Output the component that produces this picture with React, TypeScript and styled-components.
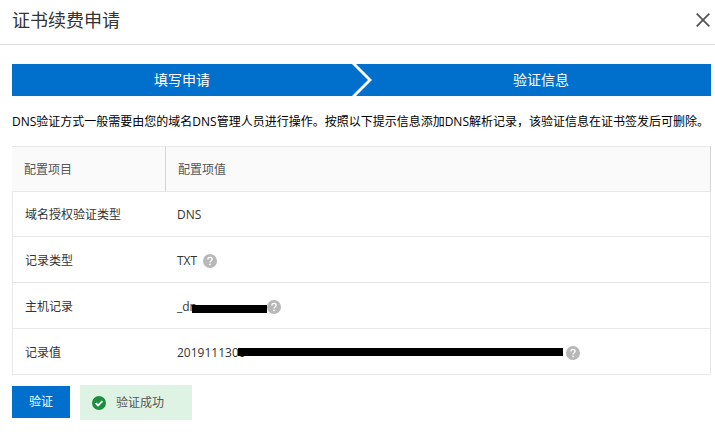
import React from "react";
import styled, { createGlobalStyle } from "styled-components";

const GlobalStyle = createGlobalStyle`
  *, *::before, *::after { box-sizing: border-box; }
  body {
    margin: 0;
    background: #fff;
    color: #333;
    font: 12px/18px "Open Sans", "Noto Sans CJK SC", sans-serif;
  }
`;

const Dialog = styled.section`
  width: 100%;
`;

const Header = styled.header`
  display: flex;
  align-items: center;
  justify-content: space-between;
  height: 45px;
  padding: 0 5px 4px 12px;
  border-bottom: 1px solid #ddd;
`;

const Title = styled.h1`
  margin: 0;
  color: #333;
  font-size: 18px;
  font-weight: 400;
  line-height: 24px;
`;

const CloseButton = styled.button`
  display: flex;
  padding: 0;
  border: 0;
  background: none;
  color: #555;
  cursor: pointer;
`;

const Content = styled.div`
  padding: 19px 4px 20px 12px;
`;

const Steps = styled.ol`
  display: grid;
  grid-template-columns: 1fr 19px 1fr;
  height: 32px;
  margin: 0 0 17px;
  padding: 0;
  list-style: none;
  background: #0070cc;
  color: #fff;
`;

const Step = styled.li`
  font-size: 14px;
  line-height: 32px;
  text-align: center;
`;

const Description = styled.p`
  margin: 0 0 15px;
  color: #000;
`;

const Table = styled.table`
  width: 100%;
  border-spacing: 0;
  table-layout: fixed;
`;

const HeadCell = styled.th<{ $width?: number }>`
  width: ${({ $width }) => ($width ? `${$width}px` : "auto")};
  height: 46px;
  padding: 2px 12px 0;
  border: solid #e8e8e8;
  border-width: 1px 0;
  border-right: 1px solid #d5d5d5;
  background: #fafafa;
  color: #555;
  font-weight: 400;
  text-align: left;
`;

const RowHead = styled.th`
  height: 46px;
  padding: 2px 12px 0;
  border-left: 1px solid #e8e8e8;
  border-bottom: 1px solid #e8e8e8;
  font-weight: 400;
  text-align: left;
`;

const Cell = styled.td`
  height: 46px;
  padding: 2px 11px 0;
  border-right: 1px solid #e8e8e8;
  border-bottom: 1px solid #e8e8e8;
`;

const Row = styled.tr`
  &:first-child > * {
    height: 45px;
  }
`;

const Value = styled.div`
  display: flex;
  align-items: center;
`;

const MaskedText = styled.span<{ $width: number }>`
  position: relative;
  width: ${({ $width }) => $width}px;
`;

const Mask = styled.span<{ $start: number; $top: number }>`
  position: absolute;
  top: ${({ $top }) => $top}px;
  right: 0;
  left: ${({ $start }) => $start}px;
  height: 8px;
  background: #000;
`;

const HelpButton = styled.button<{ $gap: number }>`
  display: flex;
  margin: 0 0 0 ${({ $gap }) => $gap}px;
  padding: 0;
  border: 0;
  background: none;
  cursor: help;
`;

const Footer = styled.footer`
  display: flex;
  align-items: center;
  gap: 10px;
  margin-top: 10px;
`;

const PrimaryButton = styled.button`
  width: 58px;
  height: 32px;
  margin: 0 0 1px;
  padding: 0;
  border: 0;
  background: #0070cc;
  color: #fff;
  font: inherit;
  cursor: pointer;
`;

const Notice = styled.div`
  display: flex;
  align-items: center;
  gap: 10px;
  width: 112px;
  height: 35px;
  padding: 1px 0 0 12px;
  background: #dff3e4;
  color: #555;
`;

const HelpIcon = () => (
  <svg width="14" height="14" viewBox="0 0 14 14" aria-hidden="true">
    <circle cx="7" cy="7" r="7" fill="#b8b8b8" />
    <path
      d="M4.9 5.4C4.9 2.7 9.1 2.7 9.1 5.3C9.1 6.7 7 6.8 7 8.6"
      fill="none"
      stroke="#fff"
      strokeWidth="1.3"
    />
    <circle cx="7" cy="10.4" r="0.8" fill="#fff" />
  </svg>
);

const Help = ({ gap, label }: { gap: number; label: string }) => (
  <HelpButton type="button" $gap={gap} aria-label={label}>
    <HelpIcon />
  </HelpButton>
);

export default function App() {
  return (
    <>
      <GlobalStyle />
      <Dialog role="dialog" aria-labelledby="dialog-title">
        <Header>
          <Title id="dialog-title">证书续费申请</Title>
          <CloseButton type="button" aria-label="关闭">
            <svg width="14" height="14" viewBox="0 0 14 14" aria-hidden="true">
              <path d="M0.7 0.7L13.3 13.3M13.3 0.7L0.7 13.3" fill="none" stroke="currentColor" strokeWidth="1.8" />
            </svg>
          </CloseButton>
        </Header>
        <Content>
          <Steps>
            <Step>填写申请</Step>
            <li aria-hidden="true">
              <svg width="19" height="32" viewBox="0 0 19 32" overflow="visible" display="block">
                <path d="M0 0H4L20 16L4 32H0L16 16Z" fill="#fff" />
              </svg>
            </li>
            <Step aria-current="step">验证信息</Step>
          </Steps>
          <Description>
            DNS验证方式一般需要由您的域名DNS管理人员进行操作。按照以下提示信息添加DNS解析记录，该验证信息在证书签发后可删除。
          </Description>
          <Table>
            <thead>
              <tr>
                <HeadCell scope="col" $width={154}>配置项目</HeadCell>
                <HeadCell scope="col">配置项值</HeadCell>
              </tr>
            </thead>
            <tbody>
              <Row>
                <RowHead scope="row">域名授权验证类型</RowHead>
                <Cell>DNS</Cell>
              </Row>
              <Row>
                <RowHead scope="row">记录类型</RowHead>
                <Cell>
                  <Value>
                    TXT
                    <Help gap={6} label="记录类型说明" />
                  </Value>
                </Cell>
              </Row>
              <Row>
                <RowHead scope="row">主机记录</RowHead>
                <Cell>
                  <Value>
                    <MaskedText $width={90}>
                      _dn
                      <Mask $start={15} $top={7} />
                    </MaskedText>
                    <Help gap={0} label="主机记录说明" />
                  </Value>
                </Cell>
              </Row>
              <Row>
                <RowHead scope="row">记录值</RowHead>
                <Cell>
                  <Value>
                    <MaskedText $width={386}>
                      2019111300
                      <Mask $start={61} $top={4} />
                    </MaskedText>
                    <Help gap={3} label="记录值说明" />
                  </Value>
                </Cell>
              </Row>
            </tbody>
          </Table>
          <Footer>
            <PrimaryButton type="button">验证</PrimaryButton>
            <Notice role="status">
              <svg width="14" height="14" viewBox="0 0 14 14" aria-hidden="true">
                <circle cx="7" cy="7" r="7" fill="#1e8e3e" />
                <path d="M3.7 7.1L6.1 9.4L10.4 5.1" fill="none" stroke="#fff" strokeWidth="1.8" />
              </svg>
              验证成功
            </Notice>
          </Footer>
        </Content>
      </Dialog>
    </>
  );
}
